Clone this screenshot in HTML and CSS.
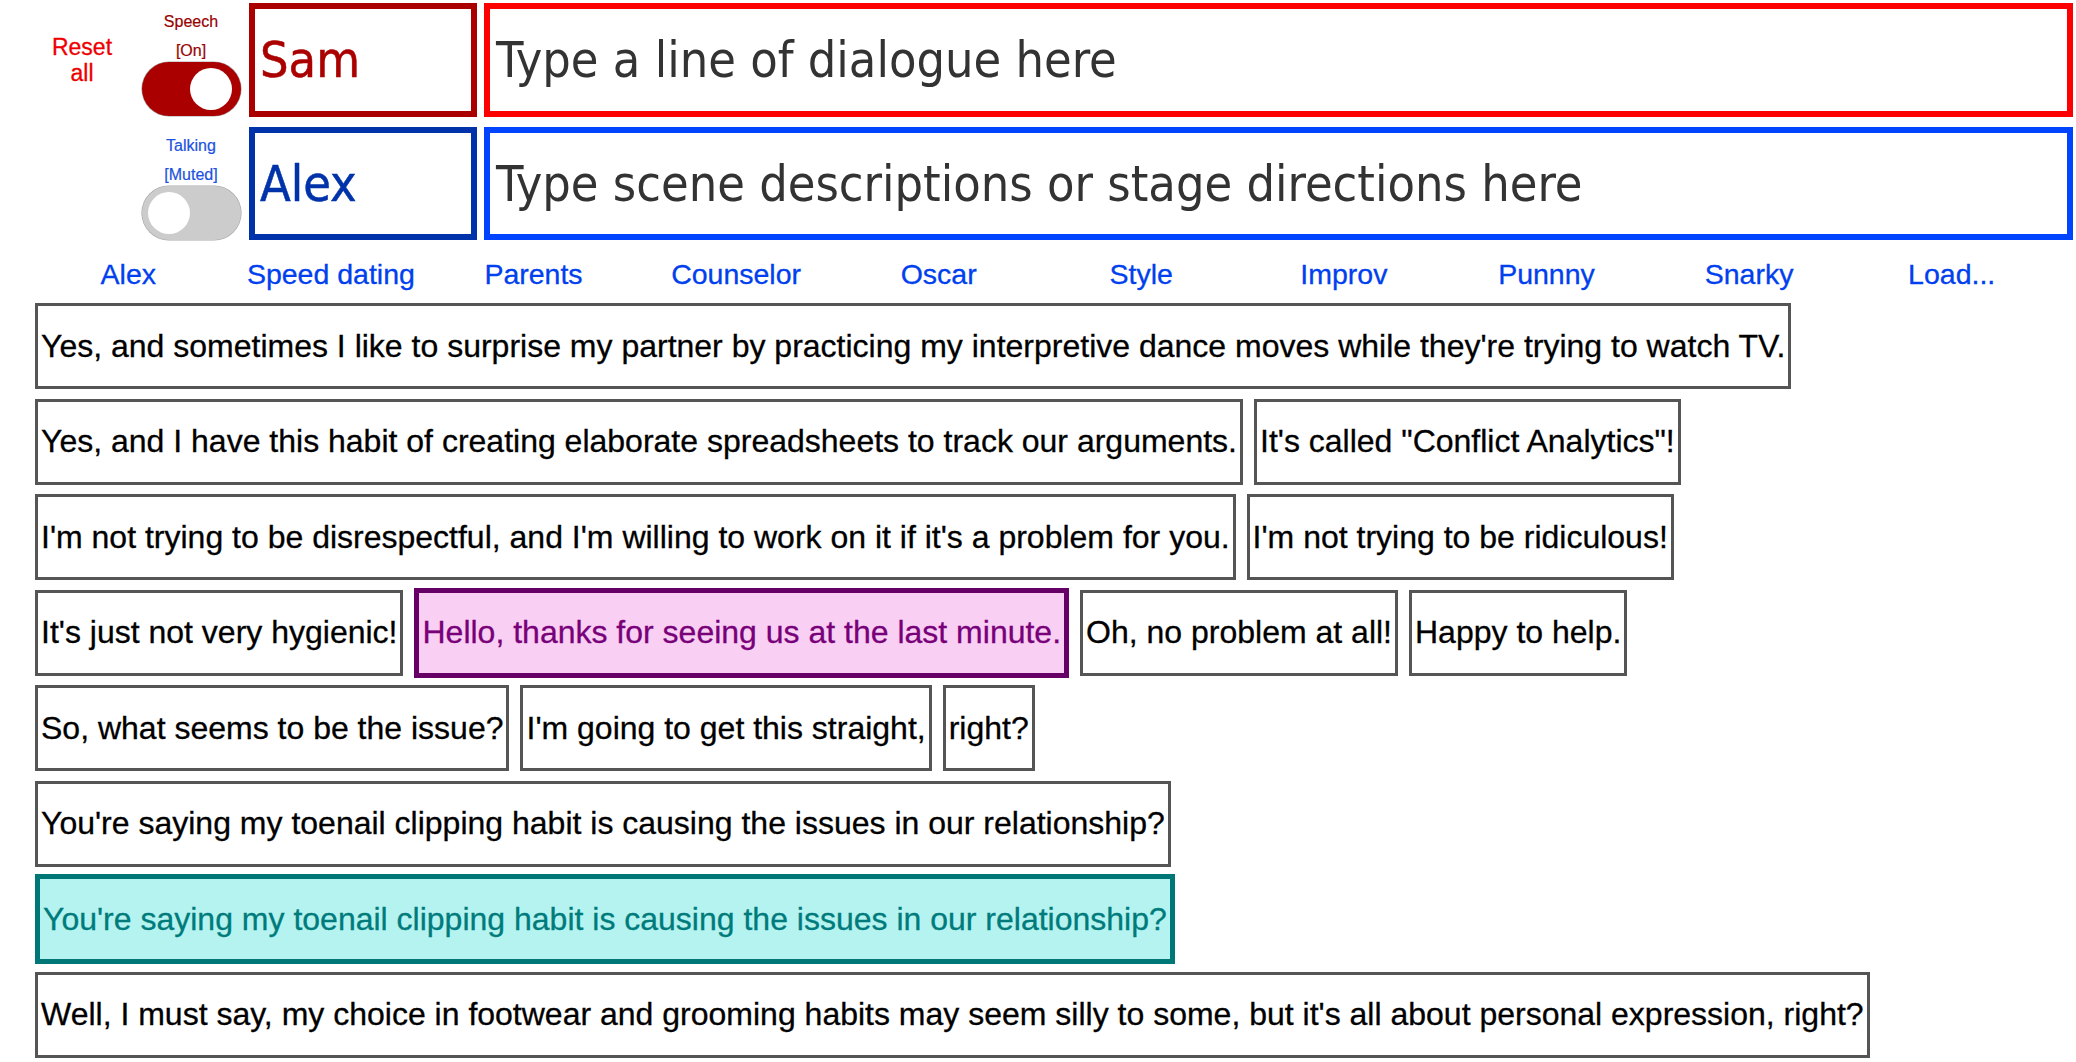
FILE: index.html
```html
<!DOCTYPE html>
<html>
<head>
<meta charset="utf-8">
<link rel="stylesheet" href="styles.css">
</head>
<body>
<div class="header">
  <div class="reset">Reset<br>all</div>
  <div class="ctrl">
    <div class="lbl lbl-red">Speech</div>
    <div class="lbl lbl-red lbl2">[On]</div>
    <div class="toggle on"><span class="knob"></span></div>
  </div>
  <div class="name sam">Sam</div>
  <div class="entry entry-red">Type a line of dialogue here</div>
  <div class="ctrl ctrl2">
    <div class="lbl lbl-blue">Talking</div>
    <div class="lbl lbl-blue lbl2">[Muted]</div>
    <div class="toggle off"><span class="knob"></span></div>
  </div>
  <div class="name alex">Alex</div>
  <div class="entry entry-blue">Type scene descriptions or stage directions here</div>
</div>
<nav class="nav">
  <span>Alex</span><span>Speed dating</span><span>Parents</span><span>Counselor</span><span>Oscar</span><span>Style</span><span>Improv</span><span>Punnny</span><span>Snarky</span><span>Load...</span>
</nav>
<div class="lines">
  <div class="row"><div class="box">Yes, and sometimes I like to surprise my partner by practicing my interpretive dance moves while they're trying to watch TV.</div></div>
  <div class="row"><div class="box">Yes, and I have this habit of creating elaborate spreadsheets to track our arguments.</div><div class="box">It's called "Conflict Analytics"!</div></div>
  <div class="row"><div class="box">I'm not trying to be disrespectful, and I'm willing to work on it if it's a problem for you.</div><div class="box">I'm not trying to be ridiculous!</div></div>
  <div class="row"><div class="box">It's just not very hygienic!</div><div class="box purple">Hello, thanks for seeing us at the last minute.</div><div class="box">Oh, no problem at all!</div><div class="box">Happy to help.</div></div>
  <div class="row"><div class="box">So, what seems to be the issue?</div><div class="box">I'm going to get this straight,</div><div class="box">right?</div></div>
  <div class="row"><div class="box">You're saying my toenail clipping habit is causing the issues in our relationship?</div></div>
  <div class="row"><div class="box teal">You're saying my toenail clipping habit is causing the issues in our relationship?</div></div>
  <div class="row"><div class="box">Well, I must say, my choice in footwear and grooming habits may seem silly to some, but it's all about personal expression, right?</div></div>
</div>
</body>
</html>
```
FILE: styles.css
```css
* { box-sizing: border-box; }
html, body { margin: 0; background: #fff; }
body {
  padding: 3px;
  font-family: "Liberation Sans", Arial, sans-serif;
  overflow: hidden;
}
.header {
  display: grid;
  grid-template-columns: 138px 100px 236px 1fr;
  grid-template-rows: 114px 113px;
  row-gap: 10px;
}
.reset {
  grid-row: 1; grid-column: 1;
  align-self: center;
  padding-left: 20px;
  text-align: center;
  color: #ee0000;
  font-size: 23px;
  line-height: 26px;
  -webkit-text-stroke: 0.3px currentColor;
}
.ctrl {
  grid-column: 2;
  display: flex;
  flex-direction: column;
  align-items: center;
  padding-top: 4px;
}
.ctrl2 { grid-row: 2; }
.lbl {
  font-size: 16px;
  line-height: 29px;
  height: 29px;
  text-align: center;
  -webkit-text-stroke: 0.2px currentColor;
}
.lbl2 { height: 26px; }
.lbl-red { color: #990000; }
.lbl-blue { color: #2052e0; }
.toggle {
  width: 99px;
  height: 54px;
  border-radius: 27px;
  display: flex;
  align-items: center;
  box-shadow: 0 0 0 0.6px rgba(0,0,0,0.35);
}
.toggle.on { background: #aa0000; justify-content: flex-end; padding-right: 9px; }
.toggle.off { background: #cccccc; justify-content: flex-start; padding-left: 6px; }
.knob {
  width: 42px; height: 42px;
  border-radius: 50%;
  background: #fff;
}
.name {
  grid-column: 3;
  margin-left: 8px;
  border: 6px solid;
  display: flex;
  align-items: center;
  padding-left: 5px;
  font-family: "DejaVu Sans Condensed", "DejaVu Sans", sans-serif;
  font-size: 50px;
  -webkit-text-stroke: 0.5px currentColor;
}
.sam { color: #aa0000; border-color: #aa0000; }
.alex { grid-row: 2; color: #0033aa; border-color: #0033aa; }
.entry {
  grid-column: 4;
  margin-left: 7px;
  border: 6px solid;
  display: flex;
  align-items: center;
  padding-left: 6px;
  color: #333;
  font-family: "DejaVu Sans Condensed", "DejaVu Sans", sans-serif;
  font-size: 50px;
  white-space: nowrap;
  overflow: hidden;
}
.entry-red { border-color: #ff0000; }
.entry-blue { grid-row: 2; border-color: #0044ff; }
.nav {
  display: grid;
  grid-template-columns: repeat(10, 1fr);
  margin: 17px 20px 12px 24px;
  color: #0040ee;
  font-size: 28.5px;
  line-height: 34px;
  text-align: center;
  -webkit-text-stroke: 0.3px currentColor;
}
.lines {
  margin-left: 32px;
  display: flex;
  flex-direction: column;
  gap: 9.5px;
}
.row {
  display: flex;
  align-items: center;
  gap: 11px;
}
.box {
  height: 86px;
  border: 3px solid #555;
  padding: 0 3px;
  display: flex;
  align-items: center;
  font-size: 32px;
  color: #000;
  white-space: nowrap;
  -webkit-text-stroke: 0.3px currentColor;
}
.purple {
  height: 90px;
  margin: -2px 0;
  border: 5px solid #660066;
  background: #f9d0f4;
  color: #780078;
}
.teal {
  height: 90px;
  margin: -2px 0;
  border: 5px solid #007777;
  background: #b5f3f1;
  color: #007b7b;
}
```
